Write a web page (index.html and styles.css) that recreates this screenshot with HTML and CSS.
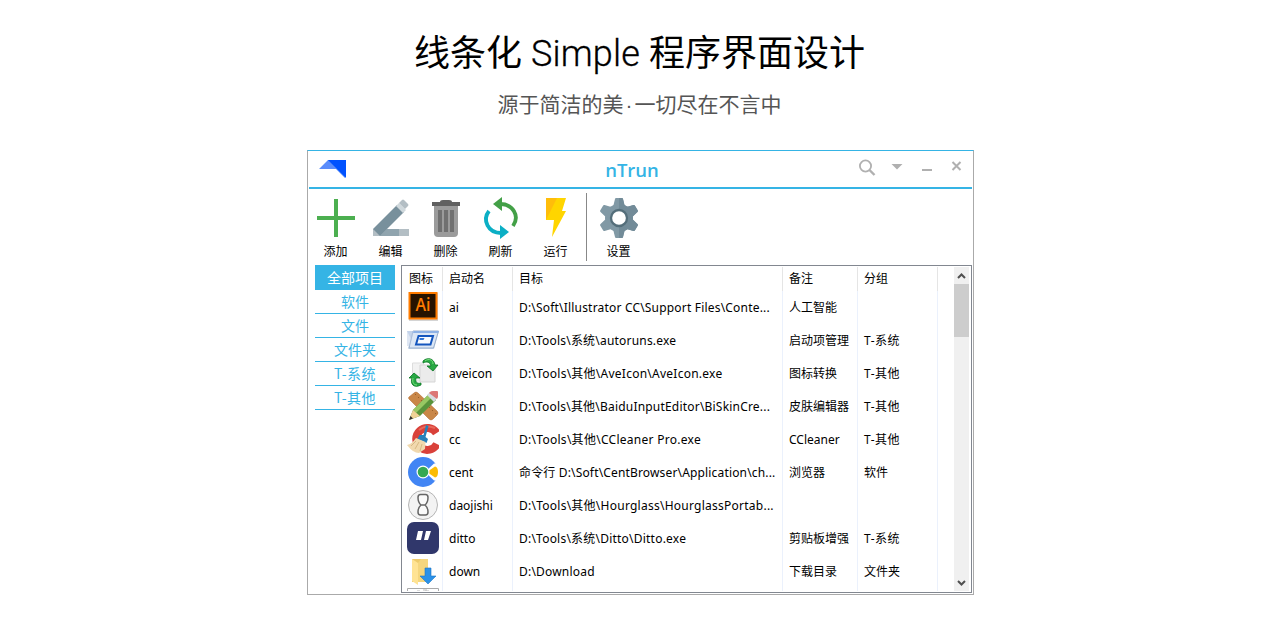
FILE: index.html
```html
<!DOCTYPE html>
<html lang="zh-CN">
<head>
<meta charset="utf-8">
<title>nTrun</title>
<link rel="stylesheet" href="styles.css">
</head>
<body>
<header class="intro">
  <h1 class="title">线条化<span class="latin">Simple</span>程序界面设计</h1>
  <p class="subtitle">源于简洁的美<span class="dot">·</span>一切尽在不言中</p>
</header>
<main class="window">
  <div class="titlebar">
    <svg class="logo" width="28" height="20" viewBox="0 0 28 20"><path d="M0 10 9 1h17v18L17 10z" fill="#5b8dfb"/><path d="M9 1h18v18z" fill="#0052ff"/></svg>
    <div class="name">nTrun</div>
    <svg class="controls" width="110" height="20" viewBox="0 0 110 20" fill="none" stroke="#b0b0b0">
      <circle cx="6.500" cy="7" r="5.600" stroke-width="1.800"/><path d="m10.500 11 5 5" stroke-width="2.400"/>
      <path d="M32.500 5h11l-5.500 5.500z" fill="#b0b0b0" stroke="none"/>
      <path d="M63 11h10" stroke-width="2"/><path d="m93.500 3 8 8m0-8-8 8" stroke-width="2"/>
    </svg>
  </div>
  <nav class="toolbar">
    <div class="tool"><svg width="40" height="40" viewBox="0 0 40 40"><path d="M20 1v38M1 20h38" stroke="#4caf50" stroke-width="4"/></svg><span>添加</span></div>
    <div class="tool"><svg width="40" height="40" viewBox="0 0 40 40"><path d="M2 31h36v7H2z" fill="#b3bec4"/><path d="M16 31h12v7H9z" fill="#90a4ae"/><path d="m2 31 24-24 7 7L9 38H2z" fill="#78909c"/><path d="m25 8 3-3 7 7-3 3z" fill="#cfd8dc"/><path d="m28 5 3-3q1-1 2 0l4 4q1 1 0 2l-3 3z" fill="#b3bec4"/><path d="M2 31 9 38H2z" fill="#b3bec4"/></svg><span>编辑</span></div>
    <div class="tool"><svg width="40" height="40" viewBox="0 0 40 40"><path d="M8 7h24v28q0 4-4 4H12q-4 0-4-4z" fill="#9b9b9b"/><path d="M6 4h8q0-2 3-2h6q3 0 3 2h8v4H6z" fill="#606060"/><path d="M12 12h4v22h-4zm6 0h4v22h-4zm6 0h4v22h-4z" fill="#707070"/></svg><span>删除</span></div>
    <div class="tool"><svg width="40" height="40" viewBox="0 0 40 40" overflow="visible"><path d="M19 6c13 0 20 12 13 22" fill="none" stroke="#43a047" stroke-width="3.800"/><path d="M12 6 21-1v14z" fill="#43a047"/><path d="M8 13c-7 9-1 22 12 22" fill="none" stroke="#0bafc5" stroke-width="3.800"/><path d="m28 34-9 7V27z" fill="#0bafc5"/></svg><span>刷新</span></div>
    <div class="tool"><svg width="40" height="40" viewBox="0 0 40 40"><path d="M10 0h20l-4 13h4L16 39l2-17h-8z" fill="#ffd500"/><path d="M10 0h11L10 22z" fill="#ffbd0a"/></svg><span>运行</span></div>
    <i class="separator"></i>
    <div class="tool"><svg width="40" height="40" viewBox="0 0 40 40"><defs><clipPath id="half"><path d="M20 0h20v40H20z"/></clipPath><g id="gear"><circle cx="20" cy="20" r="14"/><path id="tooth" d="m14.500 7 1.500-6q.200-1 1-1h6q.800 0 1 1l1.500 6v26L24 39q-.200 1-1 1h-6q-.800 0-1-1l-1.500-6z"/><use href="#tooth" transform="rotate(60 20 20)"/><use href="#tooth" transform="rotate(120 20 20)"/></g></defs><use href="#gear" fill="#8199a5"/><use href="#gear" fill="#728b98" clip-path="url(#half)"/><circle cx="20" cy="20" r="8" fill="#fff" stroke="#546e7a" stroke-width="2.300"/></svg><span>设置</span></div>
  </nav>
  <div class="content">
    <aside class="sidebar">
      <div class="group active">全部项目</div><div class="group">软件</div><div class="group">文件</div><div class="group">文件夹</div><div class="group tag">T-系统</div><div class="group tag">T-其他</div>
    </aside>
    <section class="list">
      <div class="rows">
        <div class="row head"><div>图标</div><div>启动名</div><div>目标</div><div>备注</div><div>分组</div></div>
        <div class="row"><div class="ic"><svg width="32" height="32" viewBox="0 0 32 32"><path d="M2 2h29v28H2z" fill="#aaa" opacity=".5"/><path d="M2.500 2h27v25.500h-27z" fill="#261300" stroke="#ff7c00" stroke-width="2"/><text class="ai" x="16" y="20" text-anchor="middle" fill="#ff7c00" textLength="15" lengthAdjust="spacingAndGlyphs">Ai</text></svg></div><div>ai</div><div class="wide-1">D:\Soft\Illustrator CC\Support Files\Conte...</div><div>人工智能</div><div></div></div>
        <div class="row"><div class="ic"><svg width="32" height="32" viewBox="0 0 32 32"><path d="M0 7h32l-5 18H1l3-10z" fill="#c9d8ec"/><path d="M6 7h25.500l-5 17H2z" fill="#dce7f5" stroke="#9aafcb"/><path d="M6 7h26l-1 2H5z" fill="#8eb2e6"/><path d="M11.500 12h14.500l-2.500 8.500H9z" fill="#f8fbff" stroke="#1456be" stroke-width="2"/><path d="M12.500 14h5l-1 2h-4z" fill="#3275d5"/><path d="M0 7h7L3 22H0z" fill="#bdcee7" opacity=".5"/></svg></div><div>autorun</div><div class="wide-2">D:\Tools\系统\autoruns.exe</div><div>启动项管理</div><div class="tag">T-系统</div></div>
        <div class="row"><div class="ic"><svg width="32" height="32" viewBox="0 0 32 32"><path d="M5.500 6h10l3 3v15h-13z" fill="#f2f2f2" stroke="#ddd"/><path d="M13 8h12l3 3v14H13z" fill="#ebebeb" stroke="#d5d5d5"/><path d="M16 4c4-4 11-3 12 4h3l-5 6-6-5h4c-1-4-4-5-8-3z" fill="#28a944" stroke="#087421" stroke-width=".8"/><path d="M14 28C6 32 3 26 5 21H2l5-5 6 5H9c-1 4 1 6 5 5z" fill="#28a944" stroke="#087421" stroke-width=".8"/><path d="M18 4c4-3 8-1 8 3M6 21c-1 5 1 7 4 7" fill="none" stroke="#7be07e"/></svg></div><div>aveicon</div><div class="wide-3">D:\Tools\其他\AveIcon\AveIcon.exe</div><div>图标转换</div><div class="tag">T-其他</div></div>
        <div class="row"><div class="ic"><svg width="32" height="32" viewBox="0 0 32 32"><path d="M2 9q-1-1 0-2l5-4q2-2 4 0l19 18q2 2 0 4l-4 4q-2 2-4 0z" fill="#c98748" stroke="#b56f36" stroke-width=".6"/><path d="m9 4-1 1m4 2-1 1m4 2-1 1m9 6-1 1m4 2-1 1m4 2-1 1" stroke="#8c5524" stroke-width=".8"/><path d="M2 30 6 20 22 4l7 6-16 16z" fill="#59943c"/><path d="M6 20 23 3l3 3L9 23z" fill="#98c763"/><path d="m2 30 4-10 7 6z" fill="#f0d296"/><path d="m2 30 1.500-4 2.500 2.500z" fill="#333"/><path d="m20 5 3-3 7 6-3 4z" fill="#d5dbe0"/><path d="m22 3 1-1q1-1 3-1h4q1 0 1 1v5l-1 2z" fill="#dc7776"/></svg></div><div>bdskin</div><div class="wide-4">D:\Tools\其他\BaiduInputEditor\BiSkinCre...</div><div>皮肤编辑器</div><div class="tag">T-其他</div></div>
        <div class="row"><div class="ic"><svg width="32" height="32" viewBox="0 0 32 32"><path d="M29.500 10A11 11 0 1 0 30 21" fill="none" stroke="#d9413a" stroke-width="8"/><path d="M12 7q7-6 16-2" fill="none" stroke="#e8685a" stroke-width="2"/><path d="m19 2 2.500 1-3 11 2.500 2-1.500 4-9-4 2-4h4z" fill="#267fb9"/><path d="m9 15 9.500 4-.500 7-6 4q-6 0-12-8 5-1 9-7z" fill="#f1d9ae"/><path d="m9 18-5 5m8-4-4 7m7-5-2 7" stroke="#cfae79" stroke-width=".8"/></svg></div><div>cc</div><div class="wide-5">D:\Tools\其他\CCleaner Pro.exe</div><div>CCleaner</div><div class="tag">T-其他</div></div>
        <div class="row"><div class="ic"><svg width="32" height="32" viewBox="0 0 32 32"><circle cx="16" cy="16" r="15" fill="#4285f4"/><path d="m18 16 9-8.500h5v17h-5z" fill="#fff"/><path d="m20 16 8-5.500q3 .500 3 5.500t-3 5.500z" fill="#fbbc05"/><circle cx="16" cy="16" r="6.500" fill="#fff"/><circle cx="16" cy="16" r="5.300" fill="#34a853"/></svg></div><div>cent</div><div class="wide-6">命令行 D:\Soft\CentBrowser\Application\ch...</div><div>浏览器</div><div>软件</div></div>
        <div class="row"><div class="ic"><svg width="32" height="32" viewBox="0 0 32 32"><circle cx="16" cy="16" r="14.500" fill="#f3f3f3" stroke="#b5b5b5"/><path d="M13.500 5.500h5q2.500 0 2.500 3 0 5-3 7.500 3 2.500 3 7 0 3-2.500 3h-5q-2.500 0-2.500-3 0-4.500 3-7-3-2.500-3-7.500 0-3 2.500-3zm.500 10.500h4" fill="#fafafa" stroke="#666" stroke-width="1.500"/></svg></div><div>daojishi</div><div class="wide-7">D:\Tools\其他\Hourglass\HourglassPortab...</div><div></div><div></div></div>
        <div class="row"><div class="ic"><svg width="32" height="32" viewBox="0 0 32 32"><rect width="32" height="32" rx="7" fill="#30376b"/><path d="M11 9h5l-2 9H9zm8 0h5l-3 9h-4z" fill="#fff"/></svg></div><div>ditto</div><div class="wide-8">D:\Tools\系统\Ditto\Ditto.exe</div><div>剪贴板增强</div><div class="tag">T-系统</div></div>
        <div class="row"><div class="ic"><svg width="32" height="32" viewBox="0 0 32 32"><path d="M5 4h16v23H5z" fill="#eecb6c"/><path d="m5 4 6 4v22l-6-4z" fill="#ffe394"/><path d="M11 8l3-4h7v23H11z" fill="#f5d67e"/><path d="M18 13h6v8h5l-8 8-8-8h5z" fill="#2b91e8" stroke="#1d77c5" stroke-width=".6"/></svg></div><div>down</div><div class="wide-9">D:\Download</div><div>下载目录</div><div>文件夹</div></div>
        <div class="row last"><div class="ic"><svg width="32" height="4" viewBox="0 0 32 4"><path d="M.500 4V.500h31V4" fill="#fff" stroke="#aaa"/><path d="M10 3h3m3-1h4m-2 1h4" fill="none" stroke="#bbb"/></svg></div><div></div><div></div><div></div><div></div></div>
      </div>
      <div class="scrollbar"><svg width="15" height="17" viewBox="0 0 15 17"><path d="m4 11 3.500-3.500L11 11" fill="none" stroke="#505050" stroke-width="2"/></svg><div class="thumb"></div><svg class="down" width="15" height="17" viewBox="0 0 15 17"><path d="m4 7 3.500 3.500L11 7" fill="none" stroke="#505050" stroke-width="2"/></svg></div>
    </section>
  </div>
</main>
</body>
</html>
```
FILE: styles.css
```css
* { box-sizing: border-box; }
body { margin: 0; height: 617px; overflow: hidden; background: #fff; color: #000; font: 12px/16px "Noto Sans", "Noto Sans CJK SC", sans-serif; }
svg { display: block; flex: none; }
.intro { height: 150px; padding-top: 24px; text-align: center; }
.title { margin: 0 1px 0 0; font: 400 36px/52px "Noto Sans CJK SC", sans-serif; white-space: nowrap; }
.latin { display: inline-block; width: 127px; font-family: Roboto, sans-serif; font-weight: 300; letter-spacing: .2px; -webkit-text-stroke: .3px #000; }
.subtitle { margin: 8px 1px 0 0; color: #555; font: 400 21px/30px "Noto Sans CJK SC", sans-serif; }
.dot { display: inline-block; width: 11px; font-family: "Liberation Sans", sans-serif; }
.window { width: 667px; height: 445px; margin-left: 307px; border: 1px solid #aaa; border-top-color: #35b4e5; }
.titlebar { display: flex; align-items: flex-start; height: 38px; margin: 0 1px; border-bottom: 2px solid #35b4e5; }
.logo { margin: 8px 0 0 10px; }
.name { width: 54px; margin: 6px 0 0 258px; color: #35b4e5; font: 600 18.500px/25px "Open Sans", sans-serif; text-align: center; }
.controls { margin: 8px 0 0 200px; }
.toolbar { display: flex; height: 76px; }
.tool { display: flex; flex-direction: column; align-items: center; width: 55px; padding-top: 9px; font-family: "Noto Sans CJK SC", sans-serif; }
.tool span { margin-top: 5px; }
.separator { width: 1px; height: 68px; margin: 4px 4px 0 3px; background: #888; }
.content { display: flex; gap: 6px; padding-left: 7px; }
.sidebar { width: 80px; }
.group { height: 24px; border-bottom: 1px solid #35b4e5; color: #35b4e5; font: 14px/23px "Noto Sans CJK SC", sans-serif; text-align: center; }
.group.active { height: 25px; background: #35b4e5; color: #fff; line-height: 25px; }
.group.tag { letter-spacing: .5px; }
.list { display: flex; justify-content: space-between; width: 571px; height: 328px; padding-right: 2px; border: 1px solid #828790; overflow: hidden; }
.row { display: grid; grid-template-columns: 41px 70px 270px 75px 80px; height: 33px; line-height: 34px; white-space: nowrap; }
.row > div { padding-left: 6px; border-right: 1px solid #ebf1fc; overflow: hidden; }
.row > .ic { padding-left: 5px; }
.row.head { height: 25px; padding-top: 1px; line-height: 24px; }
.row.head > div { border-color: #e5e5e5; }
.row.head > div:first-child { padding-left: 7px; }
.row.last { height: 3px; }
.row > .tag { letter-spacing: .5px; }
.wide-1 { letter-spacing: .19px; }
.wide-2 { letter-spacing: .2px; }
.wide-3 { letter-spacing: .25px; }
.wide-4 { letter-spacing: .2px; }
.wide-5 { letter-spacing: .28px; }
.wide-6 { letter-spacing: .16px; }
.wide-7 { letter-spacing: .25px; }
.wide-8 { letter-spacing: .22px; }
.wide-9 { letter-spacing: .2px; }
.ai { font: 600 18px "Open Sans", sans-serif; }
.scrollbar { display: flex; flex-direction: column; width: 15px; margin: 1px 0; background: #f0f0f0; }
.thumb { height: 53px; background: #cdcdcd; }
.down { margin-top: auto; }
```
